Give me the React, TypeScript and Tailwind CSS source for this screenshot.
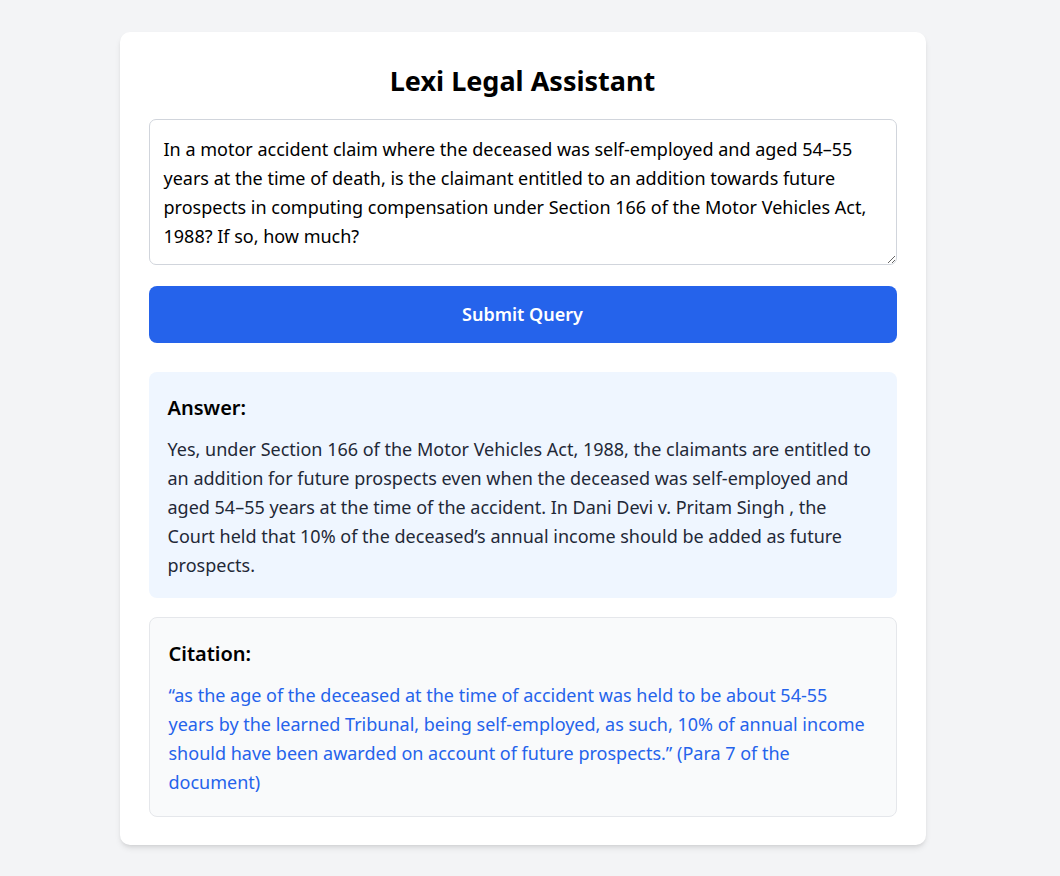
import { useState } from 'react';

const QUERY =
  'In a motor accident claim where the deceased was self-employed and aged 54–55 years at the time of death, is the claimant entitled to an addition towards future prospects in computing compensation under Section 166 of the Motor Vehicles Act, 1988? If so, how much?';

const App = () => {
  const [query, setQuery] = useState(QUERY);

  return (
    <div className="min-h-screen bg-gray-100 pt-8 pb-8 font-['Noto_Sans',sans-serif]">
      <div className="w-[1045px]">
        <div className="mx-auto w-[806px] rounded-[10px] bg-white px-[29px] pt-[30px] pb-[28px] shadow-md">
          <h1 className="mb-[19px] text-center text-[27px] font-bold leading-[38.4px] text-black">
            Lexi Legal Assistant
          </h1>

          <textarea
            value={query}
            onChange={(e) => setQuery(e.target.value)}
            className="block h-[146px] w-full rounded-[7px] border border-gray-300 px-[14px] py-[15px] text-[18px] leading-[28.8px] text-black outline-none"
          />

          <button className="mt-[21px] h-[57px] w-full rounded-[8px] bg-[#2563eb] text-[18px] font-semibold text-white">
            Submit Query
          </button>

          <div className="mt-[29px] rounded-[8px] bg-[#eff6ff] p-[19px]">
            <h2 className="mb-[10px] text-[20px] font-semibold leading-[34px] text-black">Answer:</h2>
            <p className="text-[18px] leading-[28.8px] text-[#1f2937]">
              Yes, under Section 166 of the Motor Vehicles Act, 1988, the claimants are entitled to an addition for
              future prospects even when the deceased was self-employed and aged 54–55 years at the time of the
              accident. In Dani Devi v. Pritam Singh , the Court held that 10% of the deceased’s annual income should
              be added as future prospects.
            </p>
          </div>

          <div className="mt-[19px] rounded-[8px] border border-[#e5e7eb] bg-[#f9fafb] p-[19px]">
            <h2 className="mb-[10px] text-[20px] font-semibold leading-[34px] text-black">Citation:</h2>
            <p className="text-[18px] leading-[28.8px] text-[#2563eb]">
              “as the age of the deceased at the time of accident was held to be about 54-55 years by the learned
              Tribunal, being self-employed, as such, 10% of annual income should have been awarded on account of
              future prospects.” (Para 7 of the document)
            </p>
          </div>
        </div>
      </div>
    </div>
  );
};

export default App;
